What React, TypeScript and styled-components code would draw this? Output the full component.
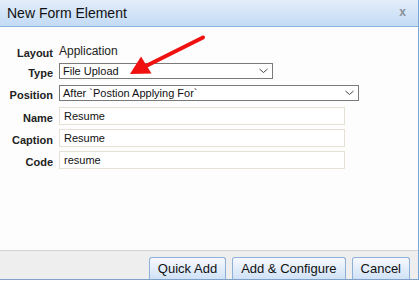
import React from "react";
import styled, { createGlobalStyle } from "styled-components";

const Global = createGlobalStyle`
  html, body { margin: 0; padding: 0; background: #ffffff; overflow: hidden; }
  body { font-family: "Liberation Sans", Arial, sans-serif; }
`;

const Window = styled.div`
  position: relative;
  width: 418px;
  height: 279px;
  display: flex;
  flex-direction: column;
  border-right: 1px solid #7ea4d1;
  border-bottom: 1px solid #7fa1ca;
  background: #fdfdfd;
`;

const TitleBar = styled.div`
  height: 26px;
  flex: none;
  display: flex;
  align-items: center;
  justify-content: space-between;
  padding: 0 12px 0 7px;
  background: linear-gradient(#e3edfa, #c3dbf5);
  border-bottom: 1px solid #8cb1e0;
  font-size: 14px;
  color: #111;
`;

const Close = styled.span`
  font-size: 12px;
  font-weight: bold;
  color: #8a9098;
  margin-top: -2px;
`;

const Body = styled.div`
  flex: 1;
  padding-top: 16px;
  display: flex;
  flex-direction: column;
`;

const Row = styled.div<{ $mt: number }>`
  display: flex;
  align-items: center;
  margin-top: ${(p) => p.$mt}px;
`;

const Label = styled.div`
  width: 53px;
  margin-right: 6px;
  text-align: right;
  font-size: 11px;
  font-weight: bold;
  color: #222;
  padding-top: 3px;
  flex: none;
`;

const Value = styled.div`
  font-size: 12px;
  color: #222;
  height: 16px;
  line-height: 16px;
`;

const Select = styled.div<{ $w: number }>`
  box-sizing: border-box;
  width: ${(p) => p.$w}px;
  height: 16px;
  border: 1px solid #7a7a7a;
  background: #fff;
  display: flex;
  align-items: center;
  justify-content: space-between;
  padding: 0 4px 0 3px;
  font-size: 11px;
  color: #111;
`;

const Input = styled.div`
  box-sizing: border-box;
  width: 286px;
  height: 18px;
  border: 1px solid #e6e1d4;
  background: #fff;
  display: flex;
  align-items: center;
  padding: 0 4px;
  font-size: 11px;
  color: #111;
`;

const Footer = styled.div`
  height: 28px;
  flex: none;
  border-top: 1px solid #d3d3d3;
  background: #eeeeee;
  display: flex;
  justify-content: flex-end;
  align-items: flex-end;
  gap: 6px;
  padding-right: 8px;
`;

const Button = styled.div`
  box-sizing: border-box;
  height: 22px;
  padding: 0 8px;
  border: 1px solid #8dafd8;
  border-bottom: none;
  border-radius: 3px 3px 0 0;
  background: linear-gradient(#f6f9fe, #d0e2f6);
  font-size: 13px;
  color: #111;
  display: flex;
  align-items: center;
`;

const Overlay = styled.svg`
  position: absolute;
  left: 0;
  top: 0;
  pointer-events: none;
`;

const Chevron = () => (
  <svg width="9" height="6" viewBox="0 0 9 6">
    <path d="M0.5 1 L4.5 4.5 L8.5 1" fill="none" stroke="#444" strokeWidth="1" />
  </svg>
);

export default function App() {
  return (
    <>
      <Global />
      <Window>
        <TitleBar>
          <span>New Form Element</span>
          <Close>x</Close>
        </TitleBar>
        <Body>
          <Row $mt={0}>
            <Label>Layout</Label>
            <Value>Application</Value>
          </Row>
          <Row $mt={4}>
            <Label>Type</Label>
            <Select $w={214}>
              <span>File Upload</span>
              <Chevron />
            </Select>
          </Row>
          <Row $mt={6}>
            <Label>Position</Label>
            <Select $w={300}>
              <span>After `Postion Applying For`</span>
              <Chevron />
            </Select>
          </Row>
          <Row $mt={6}>
            <Label>Name</Label>
            <Input>Resume</Input>
          </Row>
          <Row $mt={4}>
            <Label>Caption</Label>
            <Input>Resume</Input>
          </Row>
          <Row $mt={4}>
            <Label>Code</Label>
            <Input>resume</Input>
          </Row>
        </Body>
        <Footer>
          <Button>Quick Add</Button>
          <Button>Add &amp; Configure</Button>
          <Button>Cancel</Button>
        </Footer>
        <Overlay width="418" height="280" viewBox="0 0 418 280">
          <line x1="203" y1="37.5" x2="146" y2="66" stroke="#f01010" strokeWidth="4" strokeLinecap="round" />
          <polygon points="130,74 141,56.5 151.5,73.5" fill="#f01010" />
        </Overlay>
      </Window>
    </>
  );
}
